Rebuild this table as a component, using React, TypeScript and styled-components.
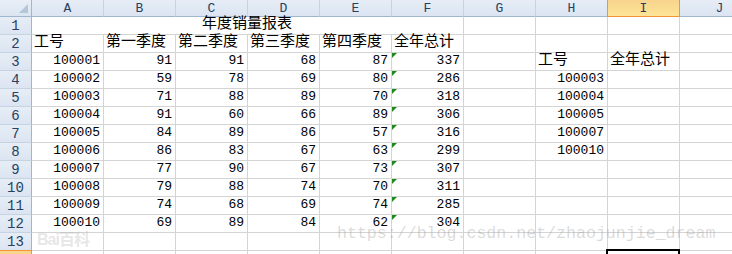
import styled, { createGlobalStyle, css } from "styled-components";

const GlobalStyle = createGlobalStyle`
  html, body {
    margin: 0;
    padding: 0;
    background: #ffffff;
    overflow: hidden;
  }
`;

const COLS = ["A", "B", "C", "D", "E", "F", "G", "H", "I", "J"];
const SELECTED_COL = "I";
const SELECTED_ROW = 14;

type CellData = { text: string; align?: "left" | "right"; cjk?: boolean; flag?: boolean };

const sales = [
  ["100001", "91", "91", "68", "87", "337"],
  ["100002", "59", "78", "69", "80", "286"],
  ["100003", "71", "88", "89", "70", "318"],
  ["100004", "91", "60", "66", "89", "306"],
  ["100005", "84", "89", "86", "57", "316"],
  ["100006", "86", "83", "67", "63", "299"],
  ["100007", "77", "90", "67", "73", "307"],
  ["100008", "79", "88", "74", "70", "311"],
  ["100009", "74", "68", "69", "74", "285"],
  ["100010", "69", "89", "84", "62", "304"],
];

const lookup = ["100003", "100004", "100005", "100007", "100010"];
const headers = ["工号", "第一季度", "第二季度", "第三季度", "第四季度", "全年总计"];

// builds the sheet contents, key = "A3" etc.
const buildCells = () => {
  const cells: Record<string, CellData> = {};
  headers.forEach((h, i) => {
    cells[`${COLS[i]}2`] = { text: h, cjk: true };
  });
  sales.forEach((row, r) => {
    row.forEach((v, c) => {
      cells[`${COLS[c]}${r + 3}`] = { text: v, align: "right", flag: c === 5 };
    });
  });
  cells["H3"] = { text: "工号", cjk: true };
  cells["I3"] = { text: "全年总计", cjk: true };
  lookup.forEach((v, i) => {
    cells[`H${i + 4}`] = { text: v, align: "right" };
  });
  return cells;
};

const Sheet = styled.div`
  position: relative;
  width: 732px;
  height: 254px;
  overflow: hidden;
  font-family: "Liberation Mono", "Noto Sans CJK SC", monospace;
`;

const Grid = styled.div`
  display: grid;
  grid-template-columns: 32px repeat(9, 72px) 80px;
  grid-template-rows: 17px repeat(14, 18px);
`;

const Corner = styled.div`
  position: relative;
  background: linear-gradient(#e9eff7, #dbe5f1);
  border-right: 1px solid #9eb6ce;
  border-bottom: 1px solid #9eb6ce;
  &::after {
    content: "";
    position: absolute;
    right: 3px;
    bottom: 3px;
    border-style: solid;
    border-width: 0 0 9px 9px;
    border-color: transparent transparent #b6c6d9 transparent;
  }
`;

const headerBase = css<{ $selected?: boolean }>`
  display: flex;
  align-items: center;
  justify-content: center;
  font-family: "Liberation Mono", monospace;
  font-size: 13px;
  color: #27415f;
  background: ${(p) =>
    p.$selected ? "linear-gradient(#f8d38d, #fde595)" : "linear-gradient(#e6edf6, #dbe5f1)"};
`;

const ColHeader = styled.div<{ $selected?: boolean }>`
  ${headerBase};
  padding-top: 1px;
  border-right: 1px solid ${(p) => (p.$selected ? "#f29536" : "#c5d3e3")};
  border-bottom: 1px solid ${(p) => (p.$selected ? "#f29536" : "#9eb6ce")};
  ${(p) => p.$selected && "border-left: 1px solid #f29536; margin-left: -1px;"}
`;

const RowHeader = styled.div<{ $selected?: boolean }>`
  ${headerBase};
  font-size: 14px;
  border-right: 1px solid ${(p) => (p.$selected ? "#f29536" : "#9eb6ce")};
  border-bottom: 1px solid ${(p) => (p.$selected ? "#f29536" : "#c5d3e3")};
  ${(p) => p.$selected && "border-top: 1px solid #f29536; margin-top: -1px;"}
`;

const Cell = styled.div<{ $align?: string; $cjk?: boolean; $flag?: boolean; $active?: boolean; $span?: number }>`
  position: relative;
  display: flex;
  align-items: flex-end;
  justify-content: ${(p) => (p.$align === "right" ? "flex-end" : p.$align === "center" ? "center" : "flex-start")};
  padding: 0 3px 1px 2px;
  font-size: ${(p) => (p.$cjk ? "15px" : "13px")};
  line-height: 16px;
  color: #000;
  white-space: nowrap;
  border-right: 1px solid #d4d4d4;
  border-bottom: 1px solid #d4d4d4;
  ${(p) => p.$span && `grid-column: span ${p.$span};`}
  ${(p) =>
    p.$flag &&
    css`
      &::before {
        content: "";
        position: absolute;
        left: 0;
        top: 0;
        border-style: solid;
        border-width: 5px 5px 0 0;
        border-color: #1d8a1d transparent transparent transparent;
      }
    `}
  ${(p) =>
    p.$active &&
    css`
      &::after {
        content: "";
        position: absolute;
        left: -2px;
        top: -2px;
        right: -1px;
        bottom: -1px;
        border: 2px solid #000;
      }
    `}
`;

const Watermark = styled.div<{ $size: number }>`
  position: absolute;
  color: rgba(150, 150, 150, 0.35);
  font-family: "Liberation Mono", monospace;
  font-size: ${(p) => p.$size}px;
  white-space: nowrap;
  pointer-events: none;
`;

const CsdnMark = styled(Watermark)`
  left: 337px;
  top: 224px;
`;

const BaiduMark = styled(Watermark)`
  left: 37px;
  top: 226px;
  font-family: "Liberation Sans", "Noto Sans CJK SC", sans-serif;
  font-weight: bold;
  color: rgba(170, 170, 170, 0.3);
  letter-spacing: -1px;
`;

const App = () => {
  const cells = buildCells();
  const rows = Array.from({ length: 14 }, (_, i) => i + 1);

  return (
    <>
      <GlobalStyle />
      <Sheet>
        <Grid>
          <Corner />
          {COLS.map((c) => (
            <ColHeader key={c} $selected={c === SELECTED_COL}>
              {c}
            </ColHeader>
          ))}
          {rows.map((r) => (
            <RowRender key={r} r={r} cells={cells} />
          ))}
        </Grid>
        <BaiduMark $size={16}>Bai百科</BaiduMark>
        <CsdnMark $size={16.6}>https://blog.csdn.net/zhaojunjie_dream</CsdnMark>
      </Sheet>
    </>
  );
};

const RowRender = ({ r, cells }: { r: number; cells: Record<string, CellData> }) => {
  if (r === 1) {
    return (
      <>
        <RowHeader>{r}</RowHeader>
        <Cell $span={6} $align="center" $cjk>
          年度销量报表
        </Cell>
        {COLS.slice(6).map((c) => (
          <Cell key={c} />
        ))}
      </>
    );
  }
  return (
    <>
      <RowHeader $selected={r === SELECTED_ROW}>{r}</RowHeader>
      {COLS.map((c) => {
        const d = cells[`${c}${r}`];
        return (
          <Cell
            key={c}
            $align={d?.align}
            $cjk={d?.cjk}
            $flag={d?.flag}
            $active={c === SELECTED_COL && r === SELECTED_ROW}
          >
            {d?.text}
          </Cell>
        );
      })}
    </>
  );
};

export default App;
